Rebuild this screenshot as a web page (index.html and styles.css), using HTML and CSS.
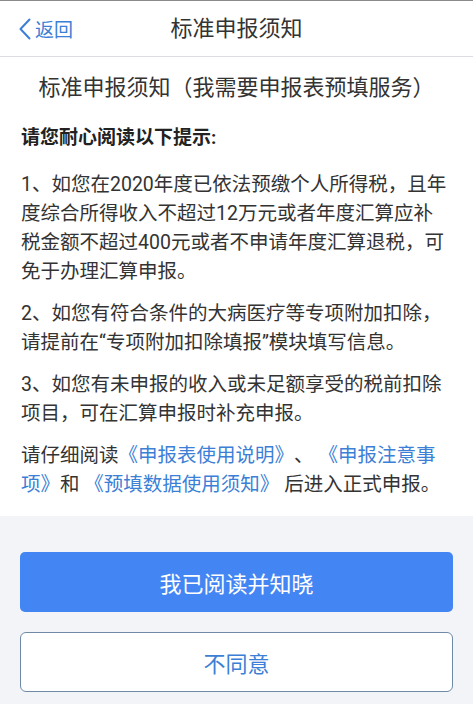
FILE: index.html
```html
<!DOCTYPE html>
<html lang="zh-CN">
<head>
<meta charset="utf-8">
<title>标准申报须知</title>
<link rel="stylesheet" href="styles.css">
</head>
<body>
<div class="page">
  <header class="nav">
    <a class="back" href="#">
      <svg class="chev" width="14" height="22" viewBox="0 0 14 22"><path d="M11.5 1.5 L2.5 11 L11.5 20.5" fill="none" stroke="#3b7fd6" stroke-width="2" stroke-linecap="round" stroke-linejoin="round"/></svg>
      <span>返回</span>
    </a>
    <h1 class="nav-title">标准申报须知</h1>
  </header>
  <main class="content">
    <h2 class="subtitle">标准申报须知（我需要申报表预填服务）</h2>
    <p class="lead">请您耐心阅读以下提示:</p>
    <p class="para">1、如您在2020年度已依法预缴个人所得税，且年度综合所得收入不超过12万元或者年度汇算应补税金额不超过400元或者不申请年度汇算退税，可免于办理汇算申报。</p>
    <p class="para">2、如您有符合条件的大病医疗等专项附加扣除，请提前在“专项附加扣除填报”模块填写信息。</p>
    <p class="para">3、如您有未申报的收入或未足额享受的税前扣除项目，可在汇算申报时补充申报。</p>
    <p class="para">请仔细阅读<a class="link" href="#">《申报表使用说明》</a>、 <a class="link" href="#">《申报注意事项》</a>和 <a class="link" href="#">《预填数据使用须知》</a> 后进入正式申报。</p>
  </main>
  <footer class="actions">
    <button class="btn btn-primary">我已阅读并知晓</button>
    <button class="btn btn-outline">不同意</button>
  </footer>
</div>
</body>
</html>
```
FILE: styles.css
```css
html, body {
  margin: 0;
  padding: 0;
  height: 100%;
}
body {
  font-family: Roboto, "Noto Sans CJK SC", "Noto Sans", sans-serif;
  color: #333;
  background: #fff;
  text-spacing-trim: space-all;
}
.page {
  display: flex;
  flex-direction: column;
  min-height: 100%;
}
.nav {
  position: relative;
  height: 55px;
  border-top: 1px solid #8a8a8a;
  border-bottom: 1px solid #dcdde2;
  display: flex;
  align-items: center;
  justify-content: center;
  background: #fff;
}
.back {
  position: absolute;
  left: 18px;
  top: 0;
  bottom: 0;
  display: flex;
  align-items: center;
  gap: 3px;
  color: #3b7fd6;
  text-decoration: none;
  font-size: 19px;
}
.chev {
  display: block;
}
.nav-title {
  margin: 0;
  font-size: 22px;
  font-weight: normal;
  color: #333;
  line-height: 1;
}
.content {
  padding: 0 21px 17px 21px;
}
.subtitle {
  margin: 16px 0 0;
  font-size: 22px;
  font-weight: normal;
  line-height: 30px;
  text-align: center;
  color: #333;
}
.lead {
  margin: 20px 0 0;
  font-size: 19px;
  font-weight: bold;
  line-height: 29px;
  color: #222;
}
.para {
  margin: 13px 0 0;
  font-size: 19.5px;
  line-height: 29px;
  color: #333;
}
.lead + .para {
  margin-top: 18px;
}
.link {
  color: #3b7fd6;
  text-decoration: none;
}
.actions {
  flex: 1;
  background: #f3f4f8;
  padding: 36px 20px 11px;
  display: flex;
  flex-direction: column;
  gap: 20px;
}
.btn {
  height: 60px;
  width: 100%;
  font-family: inherit;
  font-size: 22px;
  border-radius: 5px;
  cursor: pointer;
}
.btn-primary {
  background: #4386f3;
  color: #fff;
  border: none;
}
.btn-outline {
  background: #fff;
  color: #3b7fd6;
  border: 1px solid #6f8aa6;
  border-radius: 6px;
}
```
